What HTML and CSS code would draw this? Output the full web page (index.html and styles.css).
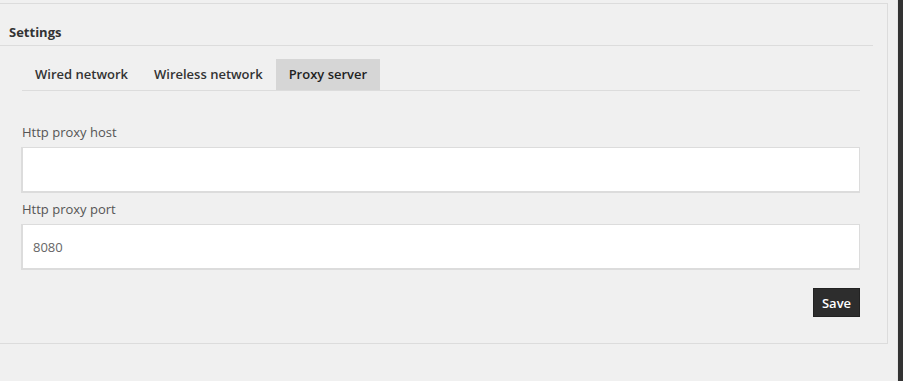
FILE: index.html
```html
<!DOCTYPE html>
<html lang="en">
<head>
    <meta charset="UTF-8">
    <meta name="viewport" content="width=device-width, initial-scale=1.0">
    <title>Settings</title>
    <link rel="stylesheet" href="styles.css">
</head>
<body>
    <div class="page">
        <div class="main">
            <div class="panel">
                <h2 class="panel-title">Settings</h2>
                <div class="tabs">
                    <a class="tab">Wired network</a>
                    <a class="tab">Wireless network</a>
                    <a class="tab active">Proxy server</a>
                </div>
                <form class="form">
                    <label for="host">Http proxy host</label>
                    <input type="text" id="host">
                    <label for="port" class="second">Http proxy port</label>
                    <input type="text" id="port" value="8080">
                    <div class="actions">
                        <button type="button">Save</button>
                    </div>
                </form>
            </div>
        </div>
        <div class="scrollbar"></div>
    </div>
</body>
</html>
```

FILE: styles.css
```css
html, body {
    margin: 0;
    height: 100%;
}
body {
    font-family: "Open Sans", Arial, sans-serif;
    background: #f0f0f0;
    color: #333;
}
.page {
    display: flex;
    height: 100%;
}
.main {
    width: 897px;
    padding-top: 3px;
}
.scrollbar {
    flex: 1;
    background: #333;
    border-left: 1px solid #e6e6e6;
}
.panel {
    width: 887px;
    border: 1px solid #dcdcdc;
    border-left: none;
    background: #f0f0f0;
    padding-bottom: 26px;
}
.panel-title {
    margin: 0 14px 0 0;
    padding: 19px 0 4px 9px;
    font-size: 13px;
    line-height: 18px;
    font-weight: 700;
    color: #333;
    border-bottom: 1px solid #dcdcdc;
}
.tabs {
    display: flex;
    margin: 13px 27px 0 22px;
    border-bottom: 1px solid #dcdcdc;
}
.tab {
    padding: 0 13px;
    height: 31px;
    line-height: 31px;
    font-size: 13px;
    font-weight: 600;
    color: #333;
}
.tab.active {
    background: #d6d6d6;
    color: #222;
}
.form {
    margin: 31px 27px 0 21px;
    display: flex;
    flex-direction: column;
}
.form label {
    display: block;
    padding-left: 1px;
    font-size: 13px;
    line-height: 20px;
    color: #555;
    margin-bottom: 5px;
}
.form label.second {
    margin-top: 6px;
}
.form input {
    box-sizing: border-box;
    width: 100%;
    height: 46px;
    margin: 0;
    padding: 0 10px;
    border: 1px solid #dcdcdc;
    border-width: 1px 1px 2px 2px;
    background: #fff;
    font-family: "Open Sans", Arial, sans-serif;
    font-size: 13px;
    color: #666;
    outline: none;
}
.actions {
    display: flex;
    justify-content: flex-end;
    margin-top: 18px;
}
button {
    height: 29px;
    width: 47px;
    padding: 0;
    border: 1px solid #222;
    background: #2d2d2d;
    color: #fff;
    font-family: "Open Sans", Arial, sans-serif;
    font-size: 13px;
    font-weight: 600;
}
```
